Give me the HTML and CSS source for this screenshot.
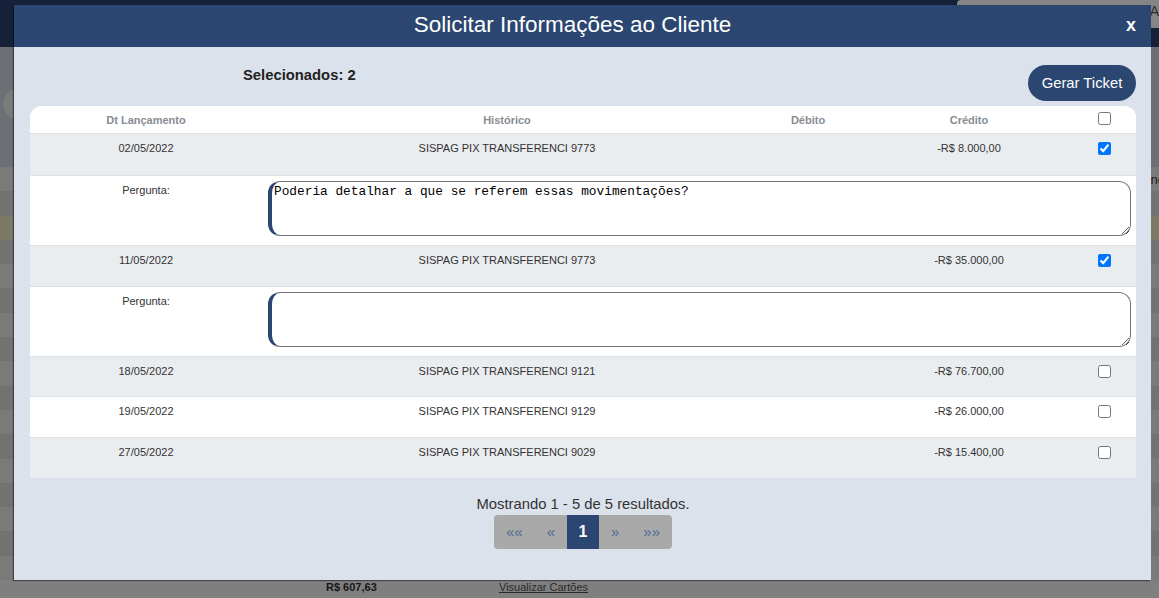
FILE: index.html
```html
<!DOCTYPE html>
<html lang="pt-BR">
<head>
<meta charset="utf-8">
<title>Solicitar Informações ao Cliente</title>
<link rel="stylesheet" href="styles.css">
</head>
<body>
<div class="page">
  <div class="topbar">
    <div class="top-box"><span class="top-box-text">AI</span></div>
  </div>
  <div class="filters">
    <div class="search-pill"></div>
  </div>
  <div class="bg-rows">
    <div class="bg-row light"><span class="bg-cut">ne</span></div>
    <div class="bg-row dark"></div>
    <div class="bg-row olive"></div>
    <div class="bg-row dark"></div>
    <div class="bg-row light"></div>
    <div class="bg-row dark"></div>
    <div class="bg-row light"></div>
    <div class="bg-row dark"></div>
    <div class="bg-row light"></div>
    <div class="bg-row dark"></div>
    <div class="bg-row light"></div>
    <div class="bg-row dark"></div>
    <div class="bg-row light"></div>
    <div class="bg-row dark"></div>
    <div class="bg-row light"></div>
    <div class="bg-row dark"></div>
    <div class="bg-row light"></div>
  </div>
  <div class="bg-footer">
    <span class="bg-total">R$ 607,63</span>
    <span class="bg-link">Visualizar Cartões</span>
  </div>
</div>

<div class="modal">
  <div class="modal-header">
    <h1 class="modal-title">Solicitar Informações ao Cliente</h1>
    <span class="modal-close">x</span>
  </div>
  <div class="modal-body">
    <div class="toolbar">
      <span class="selected">Selecionados: 2</span>
      <button class="btn-ticket">Gerar Ticket</button>
    </div>
    <div class="grid-table">
      <div class="row head">
        <div class="cell">Dt Lançamento</div>
        <div class="cell">Histórico</div>
        <div class="cell">Débito</div>
        <div class="cell">Crédito</div>
        <div class="cell chk"><input type="checkbox"></div>
      </div>
      <div class="body">
        <div class="row data first">
          <div class="cell">02/05/2022</div>
          <div class="cell">SISPAG PIX TRANSFERENCI 9773</div>
          <div class="cell"></div>
          <div class="cell">-R$ 8.000,00</div>
          <div class="cell chk"><input type="checkbox" checked></div>
        </div>
        <div class="row question">
          <div class="cell">Pergunta:</div>
          <div class="cell q-cell"><textarea class="q-text">Poderia detalhar a que se referem essas movimentações?</textarea></div>
        </div>
        <div class="row data">
          <div class="cell">11/05/2022</div>
          <div class="cell">SISPAG PIX TRANSFERENCI 9773</div>
          <div class="cell"></div>
          <div class="cell">-R$ 35.000,00</div>
          <div class="cell chk"><input type="checkbox" checked></div>
        </div>
        <div class="row question">
          <div class="cell">Pergunta:</div>
          <div class="cell q-cell"><textarea class="q-text"></textarea></div>
        </div>
        <div class="row data">
          <div class="cell">18/05/2022</div>
          <div class="cell">SISPAG PIX TRANSFERENCI 9121</div>
          <div class="cell"></div>
          <div class="cell">-R$ 76.700,00</div>
          <div class="cell chk"><input type="checkbox"></div>
        </div>
        <div class="row data">
          <div class="cell">19/05/2022</div>
          <div class="cell">SISPAG PIX TRANSFERENCI 9129</div>
          <div class="cell"></div>
          <div class="cell">-R$ 26.000,00</div>
          <div class="cell chk"><input type="checkbox"></div>
        </div>
        <div class="row data last">
          <div class="cell">27/05/2022</div>
          <div class="cell">SISPAG PIX TRANSFERENCI 9029</div>
          <div class="cell"></div>
          <div class="cell">-R$ 15.400,00</div>
          <div class="cell chk"><input type="checkbox"></div>
        </div>
      </div>
    </div>
    <div class="pager-wrap">
      <p class="pager-info">Mostrando 1 - 5 de 5 resultados.</p>
      <div class="pager">
        <span class="pg">««</span>
        <span class="pg">«</span>
        <span class="pg active">1</span>
        <span class="pg">»</span>
        <span class="pg">»»</span>
      </div>
    </div>
  </div>
</div>
</body>
</html>
```

FILE: styles.css
```css
* { box-sizing: border-box; }

html, body {
  margin: 0;
  padding: 0;
  width: 1159px;
  height: 598px;
  overflow: hidden;
  font-family: "Liberation Sans", Arial, sans-serif;
  background: #7f7f7f;
}

/* ---------- dimmed background page ---------- */
.page {
  width: 1159px;
  height: 598px;
  display: flex;
  flex-direction: column;
}

.topbar {
  height: 47px;
  background: #142139;
  display: flex;
  justify-content: flex-end;
}

.top-box {
  width: 202px;
  height: 28px;
  background: #858585;
  border-top-left-radius: 4px;
  border-bottom-left-radius: 4px;
  display: flex;
  justify-content: flex-end;
  padding-top: 3px;
  font-size: 14px;
  color: #2d2d2d;
}

.top-box-text { margin-right: -4px; }

.filters {
  height: 120px;
  background: #6c6f73;
  padding-top: 42px;
  padding-left: 3px;
}

.search-pill {
  width: 220px;
  height: 30px;
  border-radius: 15px;
  background: #7b7b7b;
}

.bg-rows {
  display: flex;
  flex-direction: column;
}

.bg-row {
  height: 24.3px;
  display: flex;
  justify-content: flex-end;
  align-items: center;
  font-size: 13px;
  color: #1e1e1e;
}

.bg-row.light { background: #7a7a7a; }
.bg-row.dark { background: #727272; }
.bg-row.olive { background: #7a7a66; }

.bg-cut { margin-right: -6px; }

.bg-footer {
  flex: 1;
  background: #7f7f7f;
  display: flex;
  align-items: flex-end;
  padding: 0 0 5px 326px;
  font-size: 11px;
}

.bg-total {
  font-weight: bold;
  color: #161616;
  width: 173px;
}

.bg-link {
  color: #2a2a2a;
  text-decoration: underline;
}

/* ---------- modal ---------- */
.modal {
  position: absolute;
  left: 14px;
  top: 5px;
  width: 1137px;
  height: 575px;
  background: #dce2eb;
  box-shadow: -1px 1px 1px rgba(0, 0, 0, 0.45);
  display: flex;
  flex-direction: column;
}

.modal-header {
  height: 42px;
  background: #2b4670;
  display: flex;
  align-items: center;
  padding: 0 15px 0 5px;
}

.modal-title {
  flex: 1;
  margin: 0;
  text-align: center;
  color: #ffffff;
  font-size: 22.5px;
  font-weight: normal;
  line-height: 26px;
  padding-bottom: 2px;
}

.modal-close {
  color: #ffffff;
  font-size: 18px;
  font-weight: bold;
  line-height: 20px;
  padding-bottom: 2px;
}

.modal-body {
  padding: 18px 15px 0 16px;
}

.toolbar {
  display: flex;
  justify-content: space-between;
  align-items: flex-start;
  height: 41px;
}

.selected {
  margin-left: 213px;
  margin-top: 2px;
  font-size: 14.8px;
  font-weight: bold;
  color: #222222;
}

.btn-ticket {
  width: 108px;
  height: 36px;
  border: none;
  border-radius: 18px;
  background: #2b4670;
  color: #ffffff;
  font-family: "Liberation Sans", Arial, sans-serif;
  font-size: 14.8px;
  padding: 0;
  margin-right: 0;
}

.grid-table {
  width: 1106px;
  background: #ffffff;
  border-radius: 12px 12px 0 0;
  overflow: hidden;
}

.row {
  display: grid;
  grid-template-columns: 232px 490px 112px 210px 62px;
  border-bottom: 1px solid #dde1e5;
}

.cell {
  text-align: center;
  font-size: 11px;
  line-height: 13px;
  color: #333333;
}

.row.head {
  height: 28px;
  background: #ffffff;
}

.row.head .cell {
  padding-top: 8px;
  font-weight: bold;
  color: #878d94;
}

.row.head .chk { padding-top: 6px; }

.row.data {
  height: 40.6px;
}

.row.data.first { height: 42px; }

.row.data .cell { padding-top: 8px; }

.body .row:nth-child(odd) { background: #eaedf0; }
.body .row:nth-child(even) { background: #ffffff; }

.row.last { border-bottom: none; height: 40px; }

.chk input {
  display: block;
  width: 13px;
  height: 13px;
  margin: 0 auto 0 24px;
}

.row.question {
  height: 70px;
}

.row.question .cell { padding-top: 8px; }

.row.question .q-cell {
  grid-column: 2 / 6;
  padding: 5px 5px 0 6px;
  text-align: left;
}

.q-text {
  display: block;
  width: 100%;
  height: 55px;
  border: 1px solid #767676;
  border-left: 4px solid #2b4670;
  border-radius: 12px;
  padding: 2px 2px;
  font-family: "Liberation Mono", "DejaVu Sans Mono", monospace;
  font-size: 12.8px;
  line-height: 15px;
  color: #000000;
  background: #ffffff;
  resize: vertical;
}

.pager-wrap {
  width: 1106px;
  display: flex;
  flex-direction: column;
  align-items: center;
  padding-top: 17px;
}

.pager-info {
  margin: 0;
  font-size: 14.8px;
  line-height: 19px;
  color: #333333;
}

.pager {
  display: flex;
  height: 34px;
  margin-top: 1px;
  background: #a9a9a9;
  border-radius: 4px;
  overflow: hidden;
}

.pg {
  display: flex;
  align-items: center;
  justify-content: center;
  padding: 0 12px;
  font-size: 15px;
  color: #4e6a94;
}

.pg.active {
  background: #2b4670;
  color: #ffffff;
  font-weight: bold;
  font-size: 16px;
  width: 32px;
  padding: 0;
}
```
